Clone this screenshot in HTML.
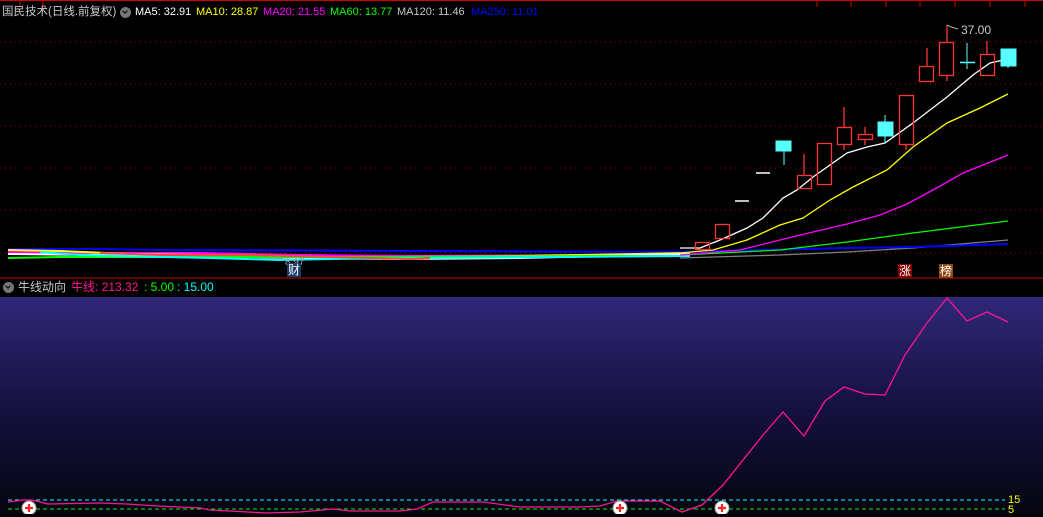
<!DOCTYPE html>
<html><head><meta charset="utf-8"><style>
body{margin:0;width:1043px;height:514px;background:#000;overflow:hidden;position:relative;font-family:"Liberation Sans","Noto Sans CJK SC",sans-serif;font-size:12px}
.t{position:absolute;white-space:nowrap;line-height:14px}
.h{font-size:11px}
.ic{position:absolute;width:11px;height:11px;border-radius:50%;background:#777}
.ic:after{content:"";position:absolute;left:3px;top:2px;width:3px;height:3px;border-right:1.5px solid #000;border-bottom:1.5px solid #000;transform:rotate(45deg)}
.tag{position:absolute;width:14px;height:14px;color:#fff;font-size:12px;line-height:14px;text-align:center}
</style></head><body>
<div style="position:absolute;left:0;top:297px;width:1043px;height:217px;background:linear-gradient(#302878,#151140 50%,#050510)"></div>
<svg width="1043" height="514" style="position:absolute;left:0;top:0">
<line x1="0" y1="0.5" x2="1043" y2="0.5" stroke="#c00" />
<g stroke="#c00"><line x1="20" y1="0" x2="20" y2="7"/><line x1="43" y1="0" x2="43" y2="7"/><line x1="817" y1="0" x2="817" y2="7"/><line x1="851" y1="0" x2="851" y2="7"/><line x1="886" y1="0" x2="886" y2="7"/><line x1="920" y1="0" x2="920" y2="7"/><line x1="955" y1="0" x2="955" y2="7"/><line x1="990" y1="0" x2="990" y2="7"/><line x1="1025" y1="0" x2="1025" y2="7"/></g>
<g stroke="#a00" stroke-dasharray="1,4"><line x1="0" y1="42" x2="1043" y2="42"/><line x1="0" y1="84" x2="1043" y2="84"/><line x1="0" y1="126" x2="1043" y2="126"/><line x1="0" y1="168" x2="1043" y2="168"/><line x1="0" y1="210" x2="1043" y2="210"/><line x1="0" y1="253" x2="1043" y2="253"/></g>
<line x1="0" y1="278" x2="1043" y2="278" stroke="#c00"/>
<g fill="none" stroke-width="2">
<polyline stroke="#00f" points="8,249 100,249 160,250 200,250 400,251 690,252"/>
<polyline stroke="#f0f" points="8,252 100,253 200,253 300,255 400,256 600,255 690,253"/>
<polyline stroke="#ff0" points="8,250 60,251 130,254 200,255 300,257 400,257 520,256 690,253"/>
<polyline stroke="#fff" points="8,254 100,255 200,256 300,258 400,259 520,258 690,254"/>
<polyline stroke="#0f0" points="8,258 60,257 200,257 400,257 600,256 690,256"/>
<polyline stroke="#0ff" points="40,252 80,255 210,258 280,260 330,259 420,258 690,256"/>
<polyline stroke="#f44" points="100,253 160,255 250,255 410,259 430,258"/>
</g>
<g fill="none" stroke-width="1.3">
<polyline stroke="#808080" points="680,258 780,255 847,252 913,248 1008,240"/>
<polyline stroke="#00f" stroke-width="2" points="680,252 847,248 913,247 1008,244"/>
<polyline stroke="#0f0" points="680,255 780,250 847,242 913,233 1008,221"/>
<polyline stroke="#f0f" points="680,255 740,250 780,240 813,232 847,224 880,215 907,204 933,190 963,173 1008,155"/>
<polyline stroke="#ff0" points="680,253 713,250 747,240 780,225 803,218 830,200 853,187 887,170 913,147 947,123 980,108 1008,94"/>
<polyline stroke="#fff" points="680,248 700,248 720,240 747,228 763,218 783,198 797,190 813,177 847,153 867,147 885,143 913,123 947,97 973,75 990,63 1008,59"/>
</g>
<g stroke="#f33" fill="none" stroke-width="1.3">
<rect x="695.5" y="242.5" width="14" height="7"/>
<rect x="715.5" y="224.5" width="14" height="14"/>
<line x1="804" y1="154" x2="804" y2="175"/><rect x="797.5" y="175.5" width="14" height="13"/>
<rect x="817.5" y="143.5" width="14" height="41"/>
<line x1="844" y1="107" x2="844" y2="127"/><line x1="844" y1="144" x2="844" y2="150"/><rect x="837.5" y="127.5" width="14" height="17"/>
<line x1="865" y1="127" x2="865" y2="145"/><rect x="858.5" y="134.5" width="14" height="5" fill="#000"/>
<line x1="906" y1="144" x2="906" y2="150"/><rect x="899.5" y="95.5" width="14" height="49"/>
<line x1="927" y1="48" x2="927" y2="66"/><rect x="919.5" y="66.5" width="14" height="15"/>
<line x1="947" y1="25" x2="947" y2="42"/><line x1="947" y1="75" x2="947" y2="81"/><rect x="939.5" y="42.5" width="14" height="33"/>
<line x1="987" y1="41" x2="987" y2="54"/><rect x="980.5" y="54.5" width="14" height="21"/>
</g>
<g stroke="#fff" stroke-width="1.5"><line x1="735" y1="201" x2="749" y2="201"/><line x1="756" y1="173" x2="770" y2="173"/></g>
<g fill="#5ff" stroke="#5ff">
<line x1="784" y1="151" x2="784" y2="165"/><rect x="776" y="141" width="15" height="10"/>
<line x1="885" y1="115" x2="885" y2="143"/><rect x="878" y="122" width="15" height="14"/>
<line x1="967" y1="43" x2="967" y2="69"/><line x1="960" y1="62.5" x2="975" y2="62.5" stroke-width="1.5"/>
<line x1="1008" y1="66" x2="1008" y2="68"/><rect x="1001" y="49" width="15" height="17"/>
</g>
<polyline points="947,25 951,27 958,29" fill="none" stroke="#aaa"/>
<line x1="8" y1="500" x2="1005" y2="500" stroke="#0ff" stroke-dasharray="4,3"/>
<line x1="8" y1="509" x2="1005" y2="509" stroke="#0e0" stroke-dasharray="4,3"/>
<polyline fill="none" stroke="#ff1493" stroke-width="1.3" points="8,502 23,500 32,500 48,504 100,503 127,504 157,506 200,508 210,510 267,513 300,512 333,509 350,511 400,511 417,509 433,502 483,502 520,507 580,507 600,506 617,501 660,501 682,512 702,505 723,485 763,435 783,412 804,436 825,401 844,387 865,394 885,395 905,355 927,323 947,298 967,321 987,312 1008,322"/>
<g><circle cx="29" cy="508" r="7" fill="#fff" stroke="#999"/><path d="M25 508h8M29 504v8" stroke="#f22" stroke-width="2.2"/></g>
<g><circle cx="620" cy="508" r="7" fill="#fff" stroke="#999"/><path d="M616 508h8M620 504v8" stroke="#f22" stroke-width="2.2"/></g>
<g><circle cx="722" cy="508" r="7" fill="#fff" stroke="#999"/><path d="M718 508h8M722 504v8" stroke="#f22" stroke-width="2.2"/></g>
</svg>
<div class="t" style="left:2px;top:5px;color:#c8c8c8;font-size:11.5px">国民技术(日线.前复权)</div>
<div class="ic" style="left:120px;top:7px"></div>
<div class="t h" style="left:135px;top:5px;color:#fff">MA5: 32.91</div>
<div class="t h" style="left:196px;top:5px;color:#ff0">MA10: 28.87</div>
<div class="t h" style="left:263px;top:5px;color:#f0f">MA20: 21.55</div>
<div class="t h" style="left:330px;top:5px;color:#0f0">MA60: 13.77</div>
<div class="t h" style="left:397px;top:5px;color:#c8c8c8">MA120: 11.46</div>
<div class="t h" style="left:471px;top:5px;color:#00f">MA250: 11.01</div>
<div class="t" style="left:961px;top:23px;color:#c8c8c8">37.00</div>
<div class="t" style="left:285px;top:256px;color:#aaa;font-size:10px">8.97</div>
<div class="tag" style="left:287px;top:263px;background:#1a3a6a">财</div>
<div class="tag" style="left:898px;top:264px;background:#800000">涨</div>
<div class="tag" style="left:939px;top:264px;background:#8b4a10">榜</div>
<div class="ic" style="left:3px;top:282px"></div>
<div class="t" style="left:18px;top:280px;color:#c8c8c8">牛线动向</div>
<div class="t" style="left:71px;top:280px;color:#ff1a8c">牛线: 213.32</div>
<div class="t" style="left:144px;top:280px;color:#0f0">: 5.00</div>
<div class="t" style="left:177px;top:280px;color:#0ff">: 15.00</div>
<div class="t" style="left:1008px;top:493px;color:#ff0;font-size:11px">15</div>
<div class="t" style="left:1008px;top:503px;color:#ff0;font-size:11px">5</div>
</body></html>
